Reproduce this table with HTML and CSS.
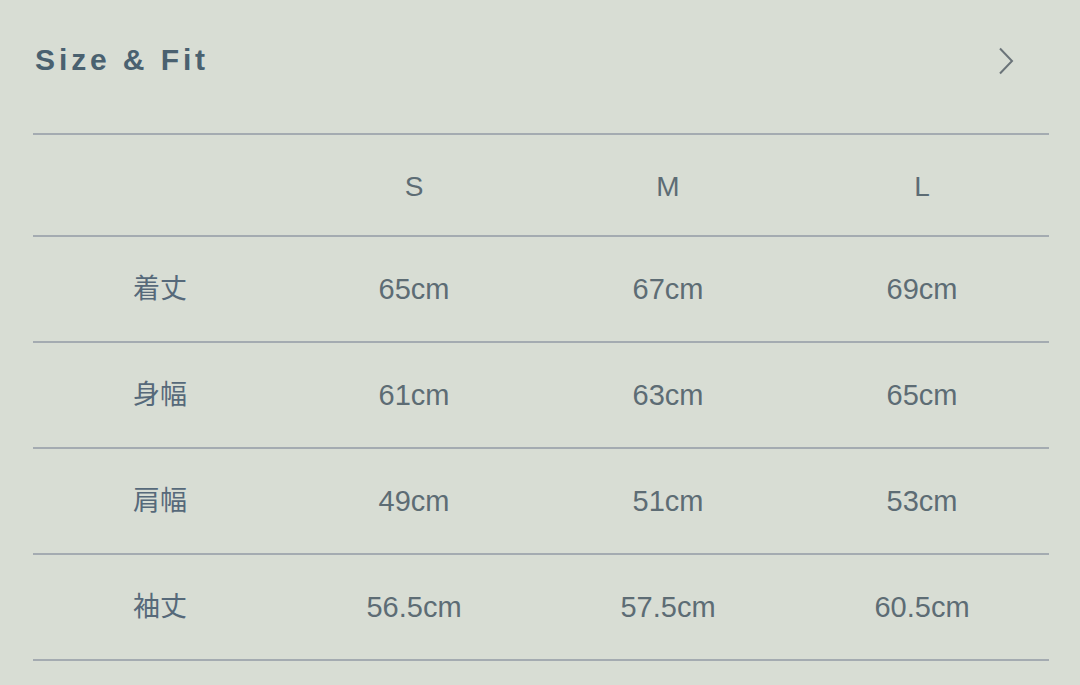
FILE: index.html
```html
<!DOCTYPE html>
<html lang="ja">
<head>
<meta charset="utf-8">
<link rel="stylesheet" href="styles.css">
</head>
<body>
<div class="panel">
  <div class="head">
    <h2 class="title">Size &amp; Fit</h2>
    <svg class="chev" width="16" height="28" viewBox="0 0 16 28"><path d="M2 1.5 L14 14 L2 26.5" fill="none" stroke="#6b7479" stroke-width="2"/></svg>
  </div>
  <div class="table">
    <div class="row hdr"><div></div><div>S</div><div>M</div><div>L</div></div>
    <div class="row"><div class="lbl">着丈</div><div>65cm</div><div>67cm</div><div>69cm</div></div>
    <div class="row"><div class="lbl">身幅</div><div>61cm</div><div>63cm</div><div>65cm</div></div>
    <div class="row"><div class="lbl">肩幅</div><div>49cm</div><div>51cm</div><div>53cm</div></div>
    <div class="row"><div class="lbl">袖丈</div><div>56.5cm</div><div>57.5cm</div><div>60.5cm</div></div>
  </div>
</div>
</body>
</html>
```
FILE: styles.css
```css
html, body {
  margin: 0;
  padding: 0;
  background: #d8ddd4;
}
.panel {
  width: 1080px;
  height: 685px;
  box-sizing: border-box;
  padding: 0 31px 0 33px;
  background: #d8ddd4;
}
.head {
  height: 133px;
  display: flex;
  align-items: center;
  justify-content: space-between;
  padding-bottom: 2px;
  box-sizing: border-box;
}
.title {
  margin: 0;
  padding-left: 2px;
  font-family: "Liberation Sans", Arial, sans-serif;
  font-weight: 700;
  font-size: 30px;
  letter-spacing: 3.9px;
  color: #4a6170;
  position: relative;
  top: -6px;
}
.chev {
  margin-right: 35px;
  position: relative;
  top: -5px;
}
.table {
  border-top: 2px solid #a4abb1;
}
.row {
  display: grid;
  grid-template-columns: repeat(4, 1fr);
  height: 104px;
  align-items: center;
  border-bottom: 2px solid #a4abb1;
  font-family: "Liberation Sans", Arial, "Noto Sans CJK JP", sans-serif;
  font-size: 29px;
  color: #5d6c74;
  text-align: center;
}
.row.hdr {
  height: 102px;
  font-size: 28px;
  padding-top: 4px;
  box-sizing: border-box;
}
.row .lbl {
  font-family: "Noto Sans CJK JP", sans-serif;
  font-size: 27px;
  color: #56697a;
  padding-bottom: 5px;
}
```
